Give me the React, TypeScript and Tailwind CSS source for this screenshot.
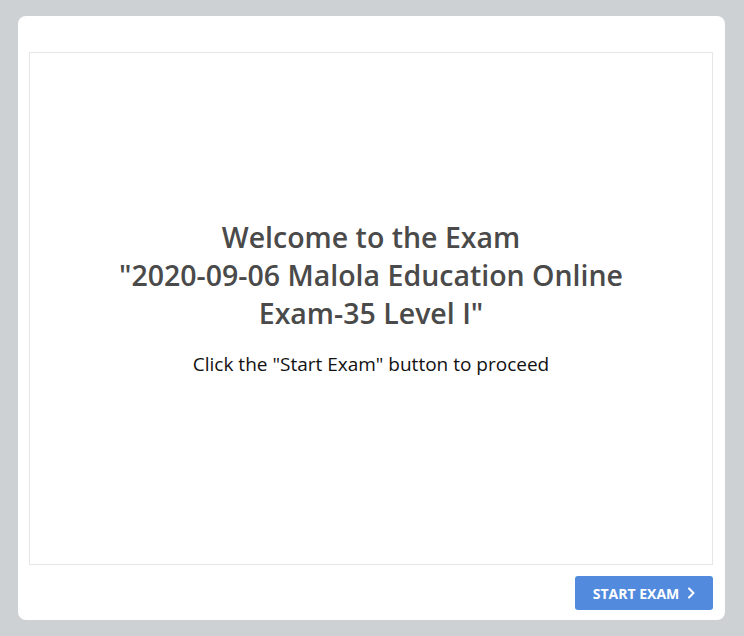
import React from "react";

export default function App() {
  return (
    <div className="w-[744px] h-[636px] bg-[#ced1d4] pt-[16px] pl-[18px]" style={{ fontFamily: '"Open Sans", sans-serif' }}>
      <div className="w-[707px] h-[604px] bg-white rounded-[8px] flex flex-col pt-[36px] pl-[11px] pr-[12px] pb-[10px]">
        <div className="h-[513px] border border-[#e6e6e6] flex flex-col items-center justify-center pb-[22px]">
          <h1 className="text-[28.5px] leading-[38px] font-semibold text-[#4a4a4a] text-center w-[560px]">
            Welcome to the Exam
            <br />
            "2020-09-06 Malola Education Online Exam-35 Level I"
          </h1>
          <p className="mt-[19px] text-[19px] leading-[26px] text-[#111] text-center">
            Click the "Start Exam" button to proceed
          </p>
        </div>
        <div className="flex justify-end mt-[11px]">
          <button className="w-[138px] h-[34px] bg-[#528ade] rounded-[3px] text-white text-[14px] font-bold flex items-center justify-center gap-[8px]">
            <span>START EXAM</span>
            <svg width="8" height="12" viewBox="0 0 8 12" fill="none">
              <path d="M2 1.5 L6.5 6 L2 10.5" stroke="white" strokeWidth="2" strokeLinecap="round" strokeLinejoin="round" />
            </svg>
          </button>
        </div>
      </div>
    </div>
  );
}
